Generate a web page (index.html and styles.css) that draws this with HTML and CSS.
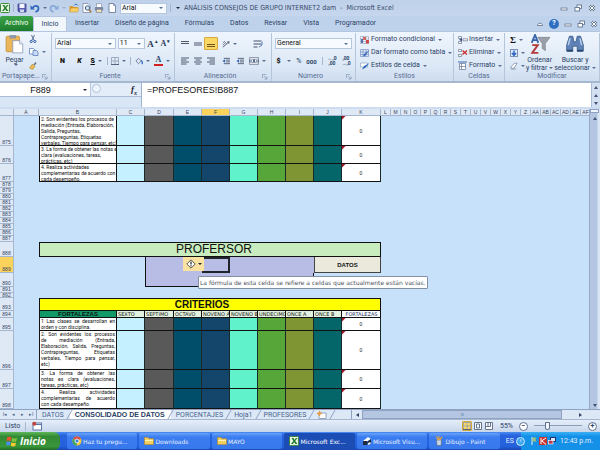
FILE: index.html
```html
<!DOCTYPE html>
<html lang="es">
<head>
<meta charset="utf-8">
<title>ANÁLISIS CONSEJOS DE GRUPO INTERNET2 dam - Microsoft Excel</title>
<link rel="stylesheet" href="styles.css">
</head>
<body>
<svg class="defs" aria-hidden="true">
  <symbol id="excel" viewBox="0 0 10 10"><rect x="0.5" y="0.5" width="9" height="9" rx="1" fill="#e9f5e4" stroke="#3c8a3a"/><path d="M2.5 2h2l1 2 1.4-2h1.6L6.2 5l2.3 3h-2L5.200 6.200 3.800 8H2l2.400-3z" fill="#1f7a2b"/></symbol>
  <symbol id="save" viewBox="0 0 10 10"><path d="M1 1h8v8H2L1 8z" fill="#5a5fb4" stroke="#3a3f8c" stroke-width=".8"/><rect x="2.500" y="1" width="5" height="4" fill="#f3f6ff"/><rect x="3" y="6.500" width="4" height="2.500" fill="#cfd6ee"/></symbol>
  <symbol id="undo" viewBox="0 0 10 10"><path d="M2.500 5C4 2 8.500 2 8.500 5.500 8.500 7.500 7 8.500 5.500 9" fill="none" stroke="#2f67bd" stroke-width="1.700"/><path d="M.5 2.200v4.300h4.300z" fill="#2f67bd"/></symbol>
  <symbol id="open" viewBox="0 0 10 10"><path d="M.5 8.500V3h3l1 1h4v4.500z" fill="#d69a2c"/><path d="M2 5h8L8.500 9H.5z" fill="#f7cf68" stroke="#c68a22" stroke-width=".5"/><path d="M5 2.500C6 .8 8 .8 9 2.500" fill="none" stroke="#3d6fb5"/></symbol>
  <symbol id="preview" viewBox="0 0 10 10"><path d="M1 .5h5l2 2v7H1z" fill="#fff" stroke="#7888a8" stroke-width=".8"/><circle cx="5.500" cy="5" r="2.200" fill="#cfe4fb" stroke="#4d5d7c"/><path d="M7 6.700 9.300 9.300" stroke="#a2762e" stroke-width="1.400"/></symbol>
  <symbol id="print" viewBox="0 0 10 10"><rect x="2.500" y=".8" width="5" height="4" fill="#fff" stroke="#7d879c" stroke-width=".6"/><rect x=".8" y="4" width="8.400" height="3.600" rx=".7" fill="#7e8ba6"/><rect x="2.200" y="6.200" width="5.600" height="3" fill="#f6e8ba" stroke="#666f82" stroke-width=".6"/></symbol>
  <symbol id="page" viewBox="0 0 10 10"><path d="M2 .5h4.500l2 2v7H2z" fill="#fff" stroke="#5d6f93" stroke-width=".8"/><path d="M6.500.5v2h2" fill="none" stroke="#5d6f93" stroke-width=".6"/></symbol>
  <symbol id="min" viewBox="0 0 8 8"><rect x="1" y="4" width="6" height="2" fill="#fff" stroke="#667791" stroke-width=".8"/></symbol>
  <symbol id="restore" viewBox="0 0 8 8"><rect x="3" y="1" width="4.500" height="3.500" fill="#fff" stroke="#667791" stroke-width=".9"/><rect x="1" y="3.500" width="4.500" height="3.500" fill="#fff" stroke="#667791" stroke-width=".9"/></symbol>
  <symbol id="close" viewBox="0 0 8 8"><path d="M1.500 1.500l5 5m0-5l-5 5" stroke="#667791" stroke-width="2.400"/><path d="M1.500 1.500l5 5m0-5l-5 5" stroke="#fff" stroke-width="1"/></symbol>
  <symbol id="paste" viewBox="0 0 18 18"><rect x="1" y="2" width="12" height="14" rx="1" fill="#eab657" stroke="#c28b34" stroke-width=".7"/><path d="M4 1h6v3H4z" fill="#8d97aa"/><path d="M7 6h6l3 3v8H7z" fill="#fff" stroke="#8796b3" stroke-width=".7"/><path d="M13 6v3h3" fill="#dce6f5" stroke="#8796b3" stroke-width=".5"/></symbol>
  <symbol id="cut" viewBox="0 0 8 8"><path d="M2.500 0l2.700 5.500M5.500 0L2.800 5.500" stroke="#5a6f98" stroke-width="1"/><circle cx="2.200" cy="6.500" r="1.100" fill="none" stroke="#2d5aa5"/><circle cx="5.800" cy="6.500" r="1.100" fill="none" stroke="#2d5aa5"/></symbol>
  <symbol id="copy" viewBox="0 0 10 8"><path d="M.5.5h4l1.500 1.500v4H.5z" fill="#fff" stroke="#4f73b5" stroke-width=".7"/><path d="M4 2.500h3.500L9 4v3.500H4z" fill="#c9dcf7" stroke="#4f73b5" stroke-width=".7"/></symbol>
  <symbol id="brush" viewBox="0 0 8 8"><path d="M5 3l2-2.500" stroke="#66708a" stroke-width="1.500"/><path d="M3.500 2l2.500 2.500L3.500 7.500.5 6z" fill="#eebc4e" stroke="#9d7828" stroke-width=".5"/></symbol>
  <symbol id="launch" viewBox="0 0 6 6"><path d="M.5 4V.5H4M2 2l3 3m0-2.500V5H2.500" fill="none" stroke="#7f93b2" stroke-width=".7"/></symbol>
  <symbol id="grid" viewBox="0 0 8 8"><path d="M.5.5h7v7h-7zM4 .5v7M.5 4h7" fill="none" stroke="#8e9cb5" stroke-width=".8"/><path d="M0 7.500h8" stroke="#56637c"/></symbol>
  <symbol id="fill" viewBox="0 0 9 8"><path d="M1 4l3-3 3 3-3 3z" fill="#dce8f8" stroke="#4d5f83" stroke-width=".8"/><path d="M7 3.500c1.500 1 1.500 3 .8 4" stroke="#2b63c0" stroke-width="1.400" fill="none"/></symbol>
  <symbol id="top" viewBox="0 0 8 8"><path d="M0 1.500h8M0 3.500h8" stroke="#4c586e" stroke-width="1.200"/></symbol>
  <symbol id="mid" viewBox="0 0 8 8"><path d="M0 3h8M0 5h8" stroke="#4c586e" stroke-width="1.200"/></symbol>
  <symbol id="bottom" viewBox="0 0 8 8"><path d="M0 4.500h8M0 6.500h8" stroke="#6b5518" stroke-width="1.200"/></symbol>
  <symbol id="left" viewBox="0 0 8 8"><path d="M0 1h8M0 3h5.500M0 5h8M0 7h5.500" stroke="#4c586e"/></symbol>
  <symbol id="center" viewBox="0 0 8 8"><path d="M0 1h8M1.500 3h5M0 5h8M1.500 7h5" stroke="#4c586e"/></symbol>
  <symbol id="right" viewBox="0 0 8 8"><path d="M0 1h8M2.500 3H8M0 5h8M2.500 7H8" stroke="#4c586e"/></symbol>
  <symbol id="indent" viewBox="0 0 9 8"><path d="M2 1h7M4.500 3H9M4.500 5H9M2 7h7" stroke="#4c586e"/><path d="M3.500 2v4L.5 4z" fill="#2f62b3"/></symbol>
  <symbol id="orient" viewBox="0 0 9 8"><path d="M1 7.500L8 1.500M8 1.500L5.800 1.800M8 1.500L7.500 3.800" stroke="#4c586e" fill="none"/><path d="M1 1.500l3 3M2.500.8L5 3.500M.8 4l2 1.500" stroke="#6b7892"/></symbol>
  <symbol id="wrap" viewBox="0 0 10 10"><path d="M.5 2h8M.5 5h8M.5 8h4" stroke="#7b879d" stroke-width="1.400"/><path d="M9 2.500v3.500L6 8" fill="none" stroke="#5b7fb8"/></symbol>
  <symbol id="merge" viewBox="0 0 10 8"><path d="M.5.5h9v7h-9zM.5 2.200h9M.5 5.800h9" fill="#fff" stroke="#6b7892" stroke-width=".7"/><path d="M0 4h3M7 4h3M4 5.500l1-3 1 3" stroke="#34507f" fill="none"/></symbol>
  <symbol id="condfmt" viewBox="0 0 10 8"><path d="M.5.5h8v7h-8zM3 .5v7M6 .5v7M.5 3h8M.5 5.500h8" fill="#fff" stroke="#8d9ab4" stroke-width=".6"/><path d="M3 1h3v3H3z" fill="#d26a6a"/><path d="M1 3h2v4H1z" fill="#5677b3"/><path d="M6 4h3v3.500H6z" fill="#c94a4a"/></symbol>
  <symbol id="tablefmt" viewBox="0 0 10 8"><path d="M.5.5h8v7h-8zM3 .5v7M6 .5v7M.5 3h8M.5 5.500h8" fill="#dbe8fa" stroke="#6b88b9" stroke-width=".6"/><path d="M9.500 1L5 7 3 7.500 4 5z" fill="#3d6cb6"/></symbol>
  <symbol id="stylefmt" viewBox="0 0 10 8"><path d="M.5 1h7v4h-7z" fill="#fff" stroke="#8096bb" stroke-width=".6"/><path d="M9.500 1L5 6 2 7.500 4 4z" fill="#2f69bd"/></symbol>
  <symbol id="insert" viewBox="0 0 10 8"><path d="M.5.5h3v2h-3zM.5 5.500h3v2h-3zM5 2.800h4.500v2H5z" fill="#fff" stroke="#66748f" stroke-width=".7"/><path d="M4 2l-3 1.800L4 5.500z" fill="#36507d"/></symbol>
  <symbol id="delete" viewBox="0 0 10 8"><path d="M.5.5h3v2h-3zM.5 5.500h3v2h-3z" fill="#fff" stroke="#66748f" stroke-width=".7"/><path d="M4.500 1.500l4.500 4m0-4l-4.500 4" stroke="#c93131" stroke-width="1.400"/></symbol>
  <symbol id="format" viewBox="0 0 10 8"><path d="M1.500 1.500h6v6h-6zM3.500 1.500v6M1.500 4.500h6" fill="#fff" stroke="#66748f" stroke-width=".7"/><path d="M0 0h9" stroke="#3d6cb6"/></symbol>
  <symbol id="down" viewBox="0 0 8 8"><rect x=".5" y=".5" width="7" height="7" fill="#d8e7fb" stroke="#7e92b5"/><path d="M4 1.500v4M2 4l2 2.500L6 4" fill="none" stroke="#2b63c0" stroke-width="1.400"/></symbol>
  <symbol id="eraser" viewBox="0 0 9 8"><path d="M1 5l4-4h3L4.500 6.500H1z" fill="#fff" stroke="#6d7c98" stroke-width=".8"/><path d="M1 7.500h6" stroke="#8d9ab4"/></symbol>
  <symbol id="sort" viewBox="0 0 18 18"><path d="M1.500 8L4.500.8 7.500 8M2.500 5.500h4" fill="none" stroke="#3763ab" stroke-width="1.600"/><path d="M2 10h5L2 17h5.500" fill="none" stroke="#b43a3a" stroke-width="1.700"/><path d="M7 3h11l-4.200 5.500V15L11 13V8.500z" fill="#9ba0a8" stroke="#6f747e" stroke-width=".5"/></symbol>
  <symbol id="find" viewBox="0 0 18 18"><path d="M4 2h3l1 5h2l1-5h3l2.500 8v5.500H11V11H7v4.500H1.500V10z" fill="#5f83b9" stroke="#34557f" stroke-width=".7"/><path d="M4.500 4L3 10M13.500 4l1.500 6" stroke="#bcd4f2" stroke-width="1.300"/><path d="M2 15h5M11 15h5" stroke="#28456f" stroke-width="1.500"/></symbol>
  <symbol id="folder" viewBox="0 0 10 8"><path d="M.5 7.500v-7h3.500l1 1.200h4.500v5.800z" fill="#f5cf5c" stroke="#b98a22" stroke-width=".6"/><path d="M1 3.500h8" stroke="#fff3b8"/></symbol>
</svg>

<header class="titlebar">
  <div class="quick">
    <svg class="ic"><use href="#excel"/></svg><i class="bar"></i>
    <button aria-label="Guardar"><svg class="ic"><use href="#save"/></svg></button>
    <button aria-label="Deshacer"><svg class="ic"><use href="#undo"/></svg><i class="caret"></i></button>
    <button class="faded" aria-label="Rehacer"><svg class="ic flip"><use href="#undo"/></svg><i class="caret"></i></button>
    <button aria-label="Abrir"><svg class="ic"><use href="#open"/></svg></button>
    <button aria-label="Vista preliminar"><svg class="ic"><use href="#preview"/></svg></button>
    <button aria-label="Imprimir"><svg class="ic"><use href="#print"/></svg></button>
    <button aria-label="Nuevo"><svg class="ic"><use href="#page"/></svg></button>
    <span class="pick quickfont"><select aria-label="Fuente rápida"><option>Arial</option></select></span>
    <i class="bar"></i><i class="caret dark"></i>
  </div>
  <h1>ANÁLISIS CONSEJOS DE GRUPO INTERNET2 dam&nbsp; -&nbsp; Microsoft Excel</h1>
  <div class="winbtns">
    <button aria-label="Minimizar"><svg class="sm"><use href="#min"/></svg></button>
    <button aria-label="Restaurar"><svg class="sm"><use href="#restore"/></svg></button>
    <button aria-label="Cerrar"><svg class="sm"><use href="#close"/></svg></button>
  </div>
</header>

<nav class="tabs">
  <button class="file">Archivo</button>
  <button class="on">Inicio</button>
  <button>Insertar</button>
  <button>Diseño de página</button>
  <button>Fórmulas</button>
  <button>Datos</button>
  <button>Revisar</button>
  <button>Vista</button>
  <button>Programador</button>
  <div class="docbtns">
    <button aria-label="Minimizar la cinta"><svg class="sm" viewBox="0 0 8 8"><path d="M1.500 5.500c0-3 5-3 5 0z" fill="#fff" stroke="#667791" stroke-width=".9"/></svg></button>
    <button class="help" aria-label="Ayuda">?</button>
    <button aria-label="Minimizar libro"><svg class="sm"><use href="#min"/></svg></button>
    <button aria-label="Restaurar libro"><svg class="sm"><use href="#restore"/></svg></button>
    <button aria-label="Cerrar libro"><svg class="sm"><use href="#close"/></svg></button>
  </div>
</nav>

<section class="ribbon">
  <div class="group">
    <div class="clip">
      <button class="big"><svg class="lg"><use href="#paste"/></svg>Pegar<i class="caret"></i></button>
      <div class="stack">
        <button aria-label="Cortar"><svg class="sm"><use href="#cut"/></svg></button>
        <button aria-label="Copiar"><svg class="ic"><use href="#copy"/></svg><i class="caret"></i></button>
        <button aria-label="Copiar formato"><svg class="sm"><use href="#brush"/></svg></button>
      </div>
    </div>
    <div class="gname">Portapape...<svg class="xs"><use href="#launch"/></svg></div>
  </div>
  <div class="group">
    <div class="rows">
      <div class="row">
        <span class="pick grow5"><select aria-label="Fuente"><option>Arial</option></select></span>
        <span class="pick grow2"><select aria-label="Tamaño"><option>11</option></select></span>
        <button class="letter">A<sup>▴</sup></button>
        <button class="letter small">A<sup>▾</sup></button>
      </div>
      <div class="row spread font">
        <button class="fmt">N</button><button class="fmt it">K</button><button class="fmt"><u>S</u><i class="caret"></i></button><i class="bar"></i>
        <button aria-label="Bordes"><svg class="sm"><use href="#grid"/></svg><i class="caret"></i></button><i class="bar"></i>
        <button aria-label="Color de relleno"><svg class="sm"><use href="#fill"/></svg><i class="caret"></i></button>
        <button><span class="color">A</span><i class="caret"></i></button>
      </div>
    </div>
    <div class="gname">Fuente<svg class="xs"><use href="#launch"/></svg></div>
  </div>
  <div class="group">
    <div class="rows align">
      <button aria-label="Alinear arriba"><svg class="sm"><use href="#top"/></svg></button>
      <button aria-label="Alinear en medio"><svg class="sm"><use href="#mid"/></svg></button>
      <button class="lit" aria-label="Alinear abajo"><svg class="sm"><use href="#bottom"/></svg></button>
      <button class="two" aria-label="Orientación"><svg class="sm"><use href="#orient"/></svg><i class="caret"></i></button>
      <button aria-label="Ajustar texto"><svg class="ic"><use href="#wrap"/></svg></button>
      <button aria-label="Izquierda"><svg class="sm"><use href="#left"/></svg></button>
      <button aria-label="Centrar"><svg class="sm"><use href="#center"/></svg></button>
      <button aria-label="Derecha"><svg class="sm"><use href="#right"/></svg></button>
      <button aria-label="Disminuir sangría"><svg class="sm"><use href="#indent"/></svg></button>
      <button aria-label="Aumentar sangría"><svg class="sm"><use href="#indent"/></svg></button>
      <button aria-label="Combinar"><svg class="ic"><use href="#merge"/></svg><i class="caret"></i></button>
    </div>
    <div class="gname">Alineación<svg class="xs"><use href="#launch"/></svg></div>
  </div>
  <div class="group">
    <div class="rows">
      <div class="row"><span class="pick grow5"><select aria-label="Formato de número"><option>General</option></select></span></div>
      <div class="row spread">
        <button class="fmt">$</button><i class="caret"></i><button>%</button><button class="zeros">000</button><i class="bar"></i>
        <button class="dec">←,0<br>,00</button><button class="dec">,00<br>→,0</button>
      </div>
    </div>
    <div class="gname">Número<svg class="xs"><use href="#launch"/></svg></div>
  </div>
  <div class="group">
    <div class="list">
      <button><svg class="ic"><use href="#condfmt"/></svg>Formato condicional<i class="caret"></i></button>
      <button><svg class="ic"><use href="#tablefmt"/></svg>Dar formato como tabla<i class="caret"></i></button>
      <button><svg class="ic"><use href="#stylefmt"/></svg>Estilos de celda<i class="caret"></i></button>
    </div>
    <div class="gname">Estilos</div>
  </div>
  <div class="group">
    <div class="list">
      <button><svg class="ic"><use href="#insert"/></svg>Insertar<i class="caret"></i></button>
      <button><svg class="ic"><use href="#delete"/></svg>Eliminar<i class="caret"></i></button>
      <button><svg class="ic"><use href="#format"/></svg>Formato<i class="caret"></i></button>
    </div>
    <div class="gname">Celdas</div>
  </div>
  <div class="group">
    <div class="edit">
      <div class="list">
        <button class="sigma">Σ<i class="caret"></i></button>
        <button aria-label="Rellenar"><svg class="sm"><use href="#down"/></svg><i class="caret"></i></button>
        <button aria-label="Borrar"><svg class="sm"><use href="#eraser"/></svg><i class="caret"></i></button>
      </div>
      <button class="big"><svg class="lg"><use href="#sort"/></svg><span>Ordenar<br>y filtrar<i class="caret"></i></span></button>
      <button class="big"><svg class="lg"><use href="#find"/></svg><span>Buscar y<br>seleccionar<i class="caret"></i></span></button>
    </div>
    <div class="gname">Modificar</div>
  </div>
</section>

<section class="formula">
  <div class="namebox"><input aria-label="Cuadro de nombres" value="F889"><i class="caret dark"></i></div>
  <div class="fx"><i class="knob"></i><em>f<sub>x</sub></em></div>
  <input class="fbar" aria-label="Barra de fórmulas" value="=PROFESORES!B887">
  <div class="fscroll"><i class="up"></i><i class="up"></i><i class="dn"></i></div>
</section>

<main class="sheet">
  <div class="cells">
    <table>
      <colgroup><col class="c0"><col class="c1"><col class="c2"><col class="c3"><col class="c4"><col class="c3"><col class="c3"><col class="c3"><col class="c3"><col class="c3"><col class="c3"><col class="c5"><col class="c6" span="21"><col></colgroup>
      <thead><tr><th></th><th>A</th><th>B</th><th>C</th><th>D</th><th>E</th><th class="sel">F</th><th>G</th><th>H</th><th>I</th><th>J</th><th>K</th><th>L</th><th>M</th><th>N</th><th>O</th><th>P</th><th>Q</th><th>R</th><th>S</th><th>T</th><th>U</th><th>V</th><th>W</th><th>X</th><th>Y</th><th>Z</th><th>AA</th><th>AB</th><th>AC</th><th>AD</th><th>AE</th><th>AF</th><th></th></tr></thead>
      <tbody>
        <tr class="h30"><th>875</th><td></td><td class="q"><div>2. Son evidentes los procesos de<br>mediación (Entrada, Elaboración,<br>Salida, Preguntas,<br>Contrapreguntas, Etiquetas<br>verbales, Tiempo para pensar, etc)</div></td><td class="x cc"></td><td class="x cd"></td><td class="x ce"></td><td class="x cf"></td><td class="x cg"></td><td class="x ch"></td><td class="x ci"></td><td class="x cj"></td><td class="x ck">0</td></tr>
        <tr class="h18"><th>876</th><td></td><td class="q"><div>3. La forma de obtener las notas es<br>clara (evaluaciones, tareas,<br>prácticas, etc)</div></td><td class="x cc"></td><td class="x cd"></td><td class="x ce"></td><td class="x cf"></td><td class="x cg"></td><td class="x ch"></td><td class="x ci"></td><td class="x cj"></td><td class="x ck">0</td></tr>
        <tr class="h18"><th>877</th><td></td><td class="q"><div>4. Realiza actividades<br>complementarias de acuerdo con<br>cada desempeño.</div></td><td class="x cc"></td><td class="x cd"></td><td class="x ce"></td><td class="x cf"></td><td class="x cg"></td><td class="x ch"></td><td class="x ci"></td><td class="x cj"></td><td class="x ck">0</td></tr>
        <tr class="h6"><th>878</th></tr>
        <tr class="h6"><th>879</th></tr>
        <tr class="h6"><th>880</th></tr>
        <tr class="h6"><th>881</th></tr>
        <tr class="h6"><th>882</th></tr>
        <tr class="h6"><th>883</th></tr>
        <tr class="h6"><th>884</th></tr>
        <tr class="h6"><th>885</th></tr>
        <tr class="h6"><th>886</th></tr>
        <tr class="h6"><th>887</th></tr>
        <tr class="h15"><th>888</th><td></td><td class="box prof" colspan="10">PROFERSOR</td></tr>
        <tr class="h16"><th class="sel">889</th><td></td><td></td><td></td><td class="lav l" colspan="2"></td><td class="active"><div class="tag"><svg class="ic" viewBox="0 0 10 10"><path d="M5 .8L9.200 5 5 9.200.8 5z" fill="#fff" stroke="#4b4b3b" stroke-width=".9"/><path d="M5 2.500v3M5 6.300v1.200" stroke="#222" stroke-width="1.200"/></svg><i class="caret dark"></i></div><div class="tip" role="tooltip">La fórmula de esta celda se refiere a celdas que actualmente están vacías.</div></td><td class="lav" colspan="3"></td><td class="datos" colspan="2">DATOS</td></tr>
        <tr class="h14"><th>890</th><td></td><td></td><td></td><td class="lav l r b" colspan="6"></td></tr>
        <tr class="h6"><th>891</th></tr>
        <tr class="h5"><th>892</th></tr>
        <tr class="h13"><th>893</th><td></td><td class="box crit" colspan="10">CRITERIOS</td></tr>
        <tr class="h7 heads"><th>894</th><td></td><td class="fort">FORTALEZAS</td><td>SEXTO</td><td>SEPTIMO</td><td>OCTAVO</td><td>NOVENO A</td><td>NOVENO B</td><td>UNDECIMO</td><td>ONCE A</td><td>ONCE B</td><td class="fk">FORTALEZAS</td></tr>
        <tr class="h13"><th>895</th><td></td><td class="q j"><div><span>1 Las clases se desarrollan en</span><span>orden y con disciplina.</span></div></td><td class="x cc"></td><td class="x cd"></td><td class="x ce"></td><td class="x cf"></td><td class="x cg"></td><td class="x ch"></td><td class="x ci"></td><td class="x cj"></td><td class="x ck">0</td></tr>
        <tr class="h39"><th>896</th><td></td><td class="q j"><div><span>2. Son evidentes los procesos</span><span>de mediación (Entrada,</span><span>Elaboración, Salida, Preguntas,</span><span>Contrapreguntas, Etiquetas</span><span>verbales, Tiempo para pensar,</span><span>etc)</span></div></td><td class="x cc"></td><td class="x cd"></td><td class="x ce"></td><td class="x cf"></td><td class="x cg"></td><td class="x ch"></td><td class="x ci"></td><td class="x cj"></td><td class="x ck">0</td></tr>
        <tr class="h19"><th>897</th><td></td><td class="q j"><div><span>3. La forma de obtener las</span><span>notas es clara (evaluaciones,</span><span>tareas, prácticas, etc)</span></div></td><td class="x cc"></td><td class="x cd"></td><td class="x ce"></td><td class="x cf"></td><td class="x cg"></td><td class="x ch"></td><td class="x ci"></td><td class="x cj"></td><td class="x ck">0</td></tr>
        <tr class="h20"><th>898</th><td></td><td class="q j"><div><span>4. Realiza actividades</span><span>complementarias de acuerdo</span><span>con cada desempeño.</span></div></td><td class="x cc"></td><td class="x cd"></td><td class="x ce"></td><td class="x cf"></td><td class="x cg"></td><td class="x ch"></td><td class="x ci"></td><td class="x cj"></td><td class="x ck">0</td></tr>
      </tbody>
    </table>
  </div>
  <div class="vscroll"><i class="split"></i><i class="up"></i><i class="space"></i><i class="dn"></i></div>
</main>

<nav class="sheets">
  <div class="nav"><button>I◂</button><button>◂</button><button>▸</button><button>▸I</button></div>
  <button class="stab">DATOS</button>
  <button class="stab on">CONSOLIDADO DE DATOS</button>
  <button class="stab">PORCENTAJES</button>
  <button class="stab">Hoja1</button>
  <button class="stab">PROFESORES</button>
  <button class="stab" aria-label="Insertar hoja"><svg class="ic" viewBox="0 0 10 8"><path d="M2 2h7v5.500H2z" fill="#fff" stroke="#7f92b3" stroke-width=".8"/><path d="M2.500 0v5M0 2.500h5" stroke="#e49a3a" stroke-width="1.300"/></svg></button>
  <div class="hscroll"><i class="lf"></i><div class="thumb">|||</div><i class="rt"></i></div>
</nav>

<div class="status">
  <span class="ready">Listo</span>
  <svg class="ic" viewBox="0 0 10 9"><rect x="1" y="1.500" width="8.500" height="7" fill="#fff" stroke="#5976a8"/><path d="M1 3h8.500" stroke="#5976a8"/><circle cx="2.300" cy="2.300" r="2" fill="#c4463a"/></svg>
  <div class="views">
    <button class="lit" aria-label="Normal"><svg class="sm"><use href="#grid"/></svg></button>
    <button aria-label="Diseño de página"><svg class="sm" viewBox="0 0 8 8"><path d="M.5.5h7v7h-7zM2.500 2h3v4h-3z" fill="#fff" stroke="#66748f"/></svg></button>
    <button aria-label="Saltos de página"><svg class="sm" viewBox="0 0 8 8"><path d="M.5.5h7v7h-7zM3 .5v4M5.500.5v4M0 4.500h5.500" fill="#fff" stroke="#66748f"/></svg></button>
  </div>
  <label class="pct" for="zoom">55%</label>
  <button class="round" aria-label="Alejar">−</button>
  <input id="zoom" type="range" min="10" max="100" value="33">
  <button class="round" aria-label="Acercar">+</button>
</div>

<footer class="taskbar">
  <button class="start"><svg class="flag" viewBox="0 0 12 12"><path d="M1 2.500q2-1.500 4.500 0L4.800 6Q2.500 4.800.5 6z" fill="#e9532c"/><path d="M6.300 2.800q2.200 1.400 4.700 0L10.200 6.500q-2.400 1-4.600-.2z" fill="#7fc241"/><path d="M.4 7q2-1.200 4.200 0L4 10.500Q2 9.300 0 10.500z" fill="#4b8df0"/><path d="M5.400 7.200q2.200 1.300 4.600.2L9.300 11q-2.200 1-4.500-.3z" fill="#f8ca2f"/></svg>Inicio</button>
  <div class="tasks">
    <button><svg class="ic" viewBox="0 0 10 10"><circle cx="5" cy="5" r="4.500" fill="#f2c937"/><path d="M5 5L1.100 2.700A4.500 4.500 0 0 1 8.900 2.700z" fill="#dd4b3e"/><path d="M5 5L1.100 2.700A4.500 4.500 0 0 0 5 9.500z" fill="#3fa457"/><circle cx="5" cy="5" r="2" fill="#3f7fe0" stroke="#fff" stroke-width=".8"/></svg>Haz tu pregu...</button>
    <button><svg class="ic"><use href="#folder"/></svg>Downloads</button>
    <button><svg class="ic"><use href="#folder"/></svg>MAYO</button>
    <button class="on"><svg class="ic"><use href="#excel"/></svg>Microsoft Exc...</button>
    <button><svg class="ic" viewBox="0 0 10 10"><path d="M1 5l5-4 3 2-5 3z" fill="#fff"/><path d="M1 5h4v4H1zM5 6l4-3v4L6 9z" fill="#222b3c"/><path d="M6 7l2.500-1v2L6 9z" fill="#f3f3f3"/></svg>Microsoft Visu...</button>
    <button><svg class="ic" viewBox="0 0 10 10"><path d="M2.500 4h5L7 9.500H3z" fill="#ccd5e3" stroke="#59677f" stroke-width=".6"/><path d="M4 4L2.500.5M5 4V.3M6 4L8 .8" stroke="#e6a33c" stroke-width="1.300"/></svg>Dibujo - Paint</button>
  </div>
  <span class="lang">ES</span>
  <div class="tray">
    <button class="back" aria-label="Ocultar">‹</button>
    <svg class="sm" viewBox="0 0 8 8"><path d="M2 0v8" stroke="#e9edf2"/><path d="M2.500.5h4l-1 2 1 2h-4z" fill="#9ec07a"/></svg>
    <svg class="sm" viewBox="0 0 8 8"><rect width="8" height="8" fill="#c8352e"/><path d="M2 1v6M2.500 4L7 1M3 4l4 3.500" stroke="#fff"/></svg>
    <svg class="sm" viewBox="0 0 8 8"><rect x="2.500" y=".5" width="5" height="4" fill="#dce8ff" stroke="#20336b"/><rect x=".5" y="3.500" width="4.500" height="3.500" fill="#c03a4f" stroke="#fff" stroke-width=".6"/></svg>
    <time>12:43 p.m.</time>
  </div>
</footer>
</body>
</html>
```
FILE: styles.css
```css
* { box-sizing: border-box; }
html, body { height: 100%; margin: 0; }
body {
  display: flex;
  flex-direction: column;
  overflow: hidden;
  font: 7px/9px Roboto, "Liberation Sans", sans-serif;
  color: #2a4266;
  background: #c8e1fa;
}
button, input, select {
  font: inherit;
  color: inherit;
  background: none;
  border: 0;
  margin: 0;
  padding: 0;
  border-radius: 0;
  min-width: 0;
}
button {
  display: flex;
  align-items: center;
  justify-content: center;
  gap: 1px;
  white-space: nowrap;
}
svg { flex: none; display: block; }
.defs { position: absolute; width: 0; height: 0; }
.xs { width: 6px; height: 6px; }
.sm { width: 8px; height: 8px; }
.ic { width: 10px; height: 10px; }
.lg { width: 20px; height: 20px; margin-bottom: 2px; }
.flip { transform: scaleX(-1); }
.faded { opacity: .4; }
.caret {
  display: inline-block;
  flex: none;
  margin-left: 2px;
  border: 2px solid transparent;
  border-top-color: #5a6f92;
  border-bottom: 0;
  vertical-align: middle;
}
.caret.dark { border-top-color: #1c2636; }
.bar { flex: none; width: 1px; height: 8px; background: #a3b4cd; }

/* Title bar */
.titlebar {
  display: grid;
  grid-template-columns: 180px 1fr 40px;
  align-items: center;
  height: 16px;
  flex: none;
  background: linear-gradient(#bfd1ea, #c5d6ed);
}
.quick { display: flex; align-items: center; gap: 3px; height: 14px; }
.quickfont { width: 48px; }
.titlebar h1 {
  margin: 0 0 0 4px;
  font: 400 7px/12px "DejaVu Sans Condensed", "DejaVu Sans", sans-serif;
  white-space: nowrap;
  color: #37496a;
}
.winbtns { display: flex; gap: 6px; }
.pick {
  display: flex;
  align-items: center;
  height: 11px;
  padding-right: 3px;
  background: #f7fafe;
  border: 1px solid #b5c6df;
  color: #111;
}
.pick select { flex: 1; appearance: none; line-height: 9px; padding-left: 1px; }
.pick::after { content: ""; border: 2px solid transparent; border-top-color: #5a6f92; border-bottom: 0; }

/* Ribbon tabs */
.tabs {
  display: flex;
  height: 15px;
  flex: none;
  background: #bfd2eb;
}
.tabs > button { padding: 0 8px; }
.tabs .file {
  width: 33px;
  background: linear-gradient(#3da44a, #1c7c2c);
  color: #f0fff0;
  border-radius: 2px 2px 0 0;
}
.tabs .on {
  width: 34px;
  background: #f1f6fd;
  border: 1px solid #b4c6df;
  border-bottom: 0;
  border-radius: 2px 2px 0 0;
}
.docbtns { display: flex; gap: 5px; align-items: center; margin-left: auto; padding-right: 2px; }
.docbtns .help { width: 10px; height: 10px; border-radius: 50%; background: #2f6fc2; color: #fff; font-weight: 700; }

/* Ribbon */
.ribbon {
  display: grid;
  grid-template-columns: 52fr 123fr 97fr 84fr 98fr 51fr 95fr;
  height: 52px;
  flex: none;
  padding: 1px 0;
  background: linear-gradient(#eff5fd, #dce8f6 70%, #cedcef);
  border-top: 1px solid #b4c6df;
  border-bottom: 2px solid #a6b7d0;
}
.group { display: flex; flex-direction: column; min-width: 0; border-right: 1px solid #b5c5db; }
.gname {
  display: flex;
  align-items: center;
  justify-content: center;
  height: 9px;
  padding: 0 3px;
  color: #576d91;
  white-space: nowrap;
}
.gname svg { margin-left: auto; }
.gname:has(svg)::before { content: ""; margin-left: auto; }
.group:first-child .gname { padding-left: 2px; }
.group:first-child .gname::before { display: none; }
.clip, .edit { display: flex; flex: 1; }
.big { flex: 1; flex-direction: column; line-height: 8px; justify-content: flex-start; padding-top: 1px; gap: 0; }
.stack { display: flex; flex-direction: column; justify-content: space-around; align-items: flex-start; width: 22px; }
.rows { display: flex; flex-direction: column; flex: 1; justify-content: space-around; padding: 2px 3px; }
.row { display: flex; align-items: center; gap: 2px; height: 13px; }
.spread { justify-content: space-around; }
.font { gap: 0; justify-content: space-between; padding: 0 1px; }
.font .fmt { min-width: 13px; }
.grow5 { flex: 5; }
.grow2 { flex: 2; }
.letter { width: 11px; font: 700 9px/10px "Liberation Serif", serif; color: #2b3a55; }
.letter.small { font-size: 8px; }
.letter sup { font-size: 5px; line-height: 5px; align-self: flex-start; }
.fmt { font-weight: 900; color: #111; }
.it { font-style: italic; }
.color { width: 9px; font: 700 8px/8px "Liberation Serif", serif; border-bottom: 2px solid #d02020; }
.align { display: grid; grid-template-columns: 13px 13px 14px 15px 14px 1fr; grid-template-rows: 13px 13px; align-content: space-around; }
.align > .two { grid-column: span 2; justify-content: flex-start; padding-left: 4px; }
.lit { background: #fbd765; border: 1px solid #d7a83a; border-radius: 1px; }
.zeros { font-weight: 700; font-size: 6px; }
.dec { font-size: 5px; line-height: 5px; font-weight: 700; }
.list { display: flex; flex-direction: column; flex: 1; justify-content: space-around; align-items: flex-start; padding: 0 0 0 4px; }
.list button { height: 12px; }
.edit .list { flex: none; padding-left: 5px; }
.edit .big + .big { flex: none; padding-right: 3px; }
.sigma { font: 700 9px/10px "Liberation Serif", serif; color: #111; }

/* Formula bar */
.formula { display: flex; height: 26px; flex: none; background: #d9e6f6; border-bottom: 2px solid #cddcf0; }
.namebox { display: flex; align-items: center; width: 90px; height: 14px; padding-right: 3px; background: #fff; border-bottom: 1px solid #a9bbd6; }
.namebox input { flex: 1; text-align: center; }
.namebox input, .fbar { font: 9px/12px "Liberation Sans", Arial, sans-serif; color: #111; }
.fx {
  display: flex;
  justify-content: space-between;
  width: 51px;
  height: 14px;
  padding: 1px 4px 1px 1px;
  background: #e3edf9;
  border-left: 1px solid #b5c6df;
  border-bottom: 1px solid #a9bbd6;
}
.knob { width: 9px; height: 9px; border: 1px solid #b3c3da; border-radius: 50%; background: #eef4fc; }
.fx em { font: italic 700 9px/10px "Liberation Serif", serif; color: #223; }
.fx sub { font-size: 6px; line-height: 4px; }
.fbar { flex: 1; padding: 0 0 11px 5px; background: #fff; border-left: 1px solid #9fb2cf; }
.fscroll {
  display: flex;
  flex-direction: column;
  align-items: center;
  justify-content: space-around;
  width: 9px;
  background: #d3e0f2;
  border-left: 1px solid #a9bbd6;
}
.up, .dn { border: 2px solid transparent; }
.up { border-bottom: 3px solid #415273; border-top: 0; }
.dn { border-top: 3px solid #415273; border-bottom: 0; }

/* Worksheet */
.sheet { display: flex; flex: 1; min-height: 0; }
.cells { flex: 1; min-width: 0; overflow: hidden; }
table {
  width: 100%;
  min-width: 591px;
  table-layout: fixed;
  border-collapse: separate;
  border-spacing: 0;
  font: 6px/6px "Liberation Sans", Arial, sans-serif;
  color: #111;
}
.c0 { width: 14px; }
.c1 { width: 25px; }
.c2 { width: 78px; }
.c3 { width: 28px; }
.c4 { width: 29px; }
.c5 { width: 39px; }
.c6 { width: 10px; }
td, th { padding: 0; overflow: hidden; white-space: nowrap; }
th {
  font-size: 5px;
  line-height: 5px;
  font-weight: 400;
  color: #33415c;
  background: #dfe9f6;
  border-right: 1px solid #a5b6cf;
  border-bottom: 1px solid #a5b6cf;
  vertical-align: bottom;
}
thead th { height: 7px; }
th.sel { background: #fbd35c; }
.h5 { height: 5px; }
.h6 { height: 6px; }
.h7 { height: 7px; }
.h13 { height: 13px; }
.h14 { height: 14px; }
.h15 { height: 15px; }
.h16 { height: 16px; }
.h18 { height: 18px; }
.h19 { height: 19px; }
.h20 { height: 20px; }
.h30 { height: 30px; }
.h39 { height: 39px; }
.h5 th { line-height: 4px; }
.q {
  padding: 0 1px;
  background: #fff;
  border: 1px solid #111;
  border-top: 0;
  vertical-align: top;
  font-family: Roboto, "Liberation Sans", sans-serif;
  font-size: 5px;
}
.h30 .q div { height: 29px; }
.h18 .q div { height: 17px; }
.h13 .q div { height: 12px; }
.h39 .q div { height: 38px; }
.h19 .q div { height: 18px; }
.h20 .q div { height: 19px; }
.j span { display: block; text-align-last: justify; }
.j span:last-child { text-align-last: left; }
.x { border-right: 1px solid #1a2a2a; border-bottom: 1px solid #111; }
.cc { background: #c5f0ff; }
.cd { background: #595959; }
.ce { background: #014e6a; }
.cf { background: #14456a; }
.cg { background: #60f3cb; }
.ch { background: #57a639; }
.ci { background: #7f9533; }
.cj { background: #046668; }
.ck {
  background: linear-gradient(135deg, #a31621 2px, #fff 3px);
  text-align: center;
  font-size: 5px;
}
.box { border: 1px solid #111; text-align: center; }
.prof { background: #c8ecbe; font-size: 12px; line-height: 13px; padding-left: 8px; }
.crit { background: #ffff00; font-size: 10px; line-height: 11px; font-weight: 700; padding-right: 16px; }
.lav { background: #b7bde5; }
.lav.l { border-left: 1px solid #111; }
.lav.r { border-right: 1px solid #111; }
.lav.b { border-bottom: 1px solid #111; }
.active { position: relative; overflow: visible; background: #b7bde5; border: 2px solid #22242c; }
.tag {
  position: absolute;
  right: 100%;
  top: -2px;
  display: flex;
  align-items: center;
  justify-content: center;
  width: 21px;
  height: 14px;
  background: #fbe2a0;
}
.tip {
  position: absolute;
  z-index: 1;
  left: -6px;
  top: 17px;
  padding: 1px;
  background: #fff;
  border: 1px solid #8590a3;
  border-radius: 1px;
  font: 6px/9px "DejaVu Sans", sans-serif;
  color: #4c5260;
}
.datos { background: #ebe9dc; border: 1px solid #444; border-top: 0; text-align: center; font-weight: 700; }
.heads td { line-height: 5px; }
.heads td:nth-child(n+4) { background: #e3f2e0; border-right: 1px solid #111; border-bottom: 1px solid #111; padding-left: 1px; font: 5px/5px "DejaVu Sans", sans-serif; }
.heads td.fort { background: #119a68; border: 1px solid #111; border-top: 0; text-align: center; font-weight: 700; }
.heads td.fk { background: #fff; text-align: center; color: #1d2f62; }
.vscroll {
  display: flex;
  flex-direction: column;
  align-items: center;
  width: 11px;
  padding-bottom: 2px;
  background: linear-gradient(90deg, #97a9c6 1px, #b4c6e1 1px, #b4c6e1 8px, #dbe6f5 9px);
}
.split { width: 9px; height: 4px; margin-bottom: 4px; background: #eef4fc; border: 1px solid #8fa2c1; }
.space { flex: 1; }

/* Sheet tabs */
.sheets { display: flex; height: 10px; flex: none; background: #dce8f6; border-top: 1px solid #8fa2c1; color: #48648f; }
.nav { display: flex; width: 37px; justify-content: space-around; font-size: 5px; border-right: 1px solid #8fa2c1; }
.stab { padding-left: 5px; gap: 5px; line-height: 8px; }
.stab::after { content: ""; width: 1px; height: 9px; background: #8fa2c1; transform: skewX(-30deg); }
.stab.on { background: #fff; font-family: "Liberation Sans", sans-serif; font-weight: 700; color: #2a4266; }
.hscroll { display: flex; flex: 1; align-items: center; margin-left: 18px; padding: 0 18px 0 4px; gap: 3px; border-left: 1px solid #8fa2c1; background: #dde8f6; }
.thumb { flex: 1; height: 9px; background: #b4c6e1; border: 1px solid #8fa2c1; font-size: 4px; line-height: 7px; text-align: center; }
.lf, .rt { border: 2px solid transparent; }
.lf { border-right: 3px solid #33415c; border-left: 0; }
.rt { border-left: 3px solid #33415c; border-right: 0; margin-left: 14px; }

/* Status bar */
.status { display: flex; align-items: center; gap: 6px; height: 13px; flex: none; padding: 0 3px 0 5px; background: linear-gradient(#e6eefa, #c8d6ea); border-top: 1px solid #a6b7d0; }
.ready { padding-right: 5px; border-right: 1px solid #a6b7d0; }
.views { display: flex; gap: 1px; margin-left: auto; }
.views button { width: 10px; height: 10px; }
.round { width: 9px; height: 9px; border: 1px solid #5f7190; border-radius: 50%; background: #fff; line-height: 7px; font-weight: 700; }
#zoom { appearance: none; width: 48px; height: 8px; background: linear-gradient(transparent 3px, #8d9db8 3px, #8d9db8 4px, transparent 4px); }
#zoom::-webkit-slider-thumb { appearance: none; width: 5px; height: 8px; background: #f4f8fd; border: 1px solid #5f7190; border-radius: 1px 1px 3px 3px; }

/* Taskbar */
.taskbar { display: flex; align-items: stretch; height: 18px; flex: none; background: linear-gradient(#4a8cf2, #2663dd 20%, #2461dc 80%, #1a47b0); color: #e6efff; }
.start {
  width: 60px;
  gap: 2px;
  justify-content: flex-start;
  padding-left: 6px;
  background: linear-gradient(#5fb85a, #338a34 25%, #38963a 80%, #236b26);
  border-radius: 0 6px 6px 0;
  font: italic 700 10px/12px "Open Sans", sans-serif;
  color: #fff;
}
.flag { width: 12px; height: 12px; }
.tasks { display: grid; grid-template-columns: repeat(6, 1fr); flex: 1; gap: 2px; padding: 1px 0 1px 7px; }
.tasks button { justify-content: flex-start; gap: 1px; padding-left: 5px; background: linear-gradient(#6aa2fa, #3b7df0 25%, #3778ec); border-radius: 2px; overflow: hidden; font: 6px/9px "DejaVu Sans", sans-serif; }
.tasks .on { background: #1b4db5; color: #fff; }
.lang { align-self: center; padding: 0 7px 0 6px; }
.tray { display: flex; align-items: center; gap: 1px; width: 79px; padding-right: 7px; background: linear-gradient(#3db0f4, #1391e8 25%, #1591e6); }
.back { width: 9px; height: 9px; margin: 0 4px 0 -5px; border-radius: 50%; background: #3aa7f0; border: 1px solid #cfe9ff; line-height: 7px; }
.tray time { margin-left: auto; }
```
